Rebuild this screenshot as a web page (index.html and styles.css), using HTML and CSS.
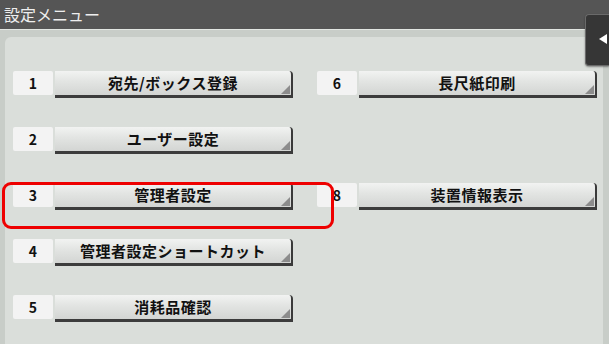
FILE: index.html
```html
<!DOCTYPE html>
<html lang="ja">
<head>
    <meta charset="UTF-8">
    <title>設定メニュー</title>
    <link rel="stylesheet" href="styles.css">
</head>
<body>
    <div class="screen">
        <div class="title-bar">設定メニュー</div>
        <div class="side-tab"><span class="arrow"></span></div>
        <div class="body-area">
            <div class="menu-panel">
                <div class="menu-grid">
                    <div class="menu-item"><span class="num">1</span><button class="menu-btn">宛先/ボックス登録</button></div>
                    <div class="menu-item"><span class="num">6</span><button class="menu-btn">長尺紙印刷</button></div>
                    <div class="menu-item"><span class="num">2</span><button class="menu-btn">ユーザー設定</button></div>
                    <div class="menu-item empty"></div>
                    <div class="menu-item"><span class="num">3</span><button class="menu-btn">管理者設定</button></div>
                    <div class="menu-item"><span class="num">8</span><button class="menu-btn">装置情報表示</button></div>
                    <div class="menu-item"><span class="num">4</span><button class="menu-btn">管理者設定ショートカット</button></div>
                    <div class="menu-item empty"></div>
                    <div class="menu-item"><span class="num">5</span><button class="menu-btn">消耗品確認</button></div>
                    <div class="menu-item empty"></div>
                </div>
            </div>
        </div>
        <div class="highlight"></div>
    </div>
</body>
</html>
```

FILE: styles.css
```css
body {
    margin: 0;
    font-family: "Noto Sans CJK JP", "Liberation Sans", sans-serif;
    background-color: #cbd0cb;
}

.screen {
    position: relative;
    width: 609px;
    height: 344px;
    overflow: hidden;
    background-color: #c8cdc8;
}

.title-bar {
    height: 29px;
    background-color: #555555;
    color: #eeeeee;
    font-size: 16px;
    line-height: 28px;
    padding-left: 4px;
    border-bottom: 1px solid #e2e6e2;
}

.side-tab {
    position: absolute;
    top: 14px;
    right: 0;
    width: 23px;
    height: 50px;
    background-color: #363636;
    border-radius: 4px 0 0 4px;
    border: 1px solid #6a6a6a;
    border-right: none;
    box-shadow: 0 1px 2px rgba(0, 0, 0, 0.4);
}

.side-tab .arrow {
    position: absolute;
    left: 13px;
    top: 19px;
    width: 0;
    height: 0;
    border-top: 5px solid transparent;
    border-bottom: 5px solid transparent;
    border-right: 8px solid #ffffff;
}

.body-area {
    padding: 7px 6px 0 5px;
}

.menu-panel {
    height: 320px;
    background-color: #dadeda;
    border-radius: 6px 6px 0 0;
    padding: 34px 0 0 8px;
    box-sizing: border-box;
}

.menu-grid {
    display: grid;
    grid-template-columns: 280px 280px;
    column-gap: 24px;
    row-gap: 31px;
}

.menu-item {
    display: flex;
    gap: 2px;
    height: 25px;
}

.num {
    width: 40px;
    height: 24px;
    background-color: #f3f3f3;
    border-radius: 2px;
    font-size: 14px;
    font-weight: bold;
    line-height: 24px;
    text-align: center;
    color: #111;
}

.menu-btn {
    position: relative;
    flex: 1;
    height: 27px;
    margin: 0;
    padding: 0 0 2px;
    border: none;
    border-right: 2px solid #3a3a3a;
    border-bottom: 3px solid #3c3c3c;
    border-radius: 0 4px 0 0;
    background: linear-gradient(#f2f3f2, #e2e4e2 45%, #d3d5d3);
    font-family: "Noto Sans CJK JP", "Liberation Sans", sans-serif;
    font-size: 15px;
    font-weight: bold;
    color: #111;
    letter-spacing: 0.5px;
}

.menu-btn::after {
    content: "";
    position: absolute;
    right: 1px;
    bottom: 1px;
    width: 0;
    height: 0;
    border-left: 9px solid transparent;
    border-bottom: 9px solid #8c8c8c;
}

.highlight {
    position: absolute;
    left: 2px;
    top: 182px;
    width: 326px;
    height: 41px;
    border: 3px solid #ee0000;
    border-radius: 9px;
}
```
